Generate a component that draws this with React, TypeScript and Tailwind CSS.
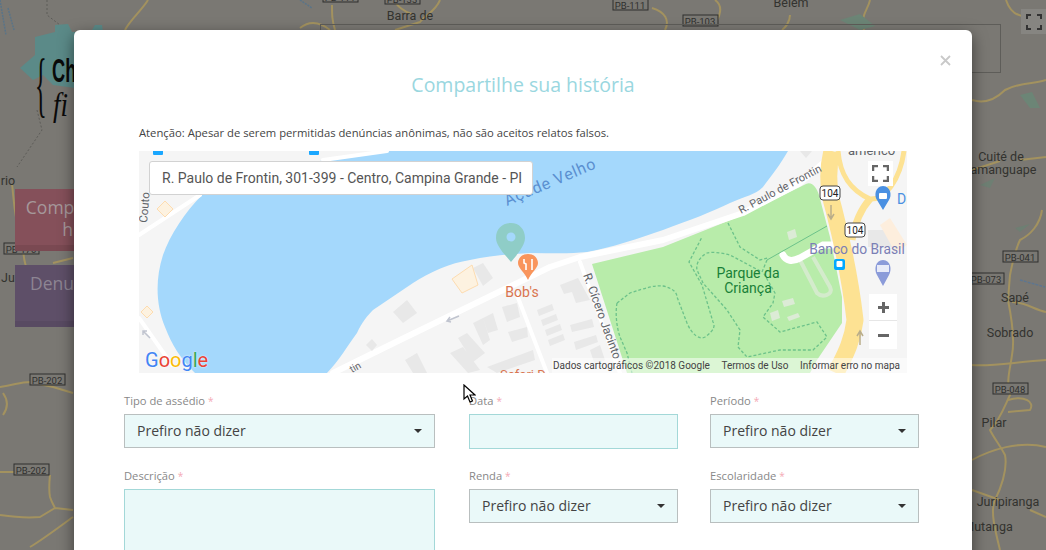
const shields = [
  { label: "PB-111", x: 630, y: 5 },
  { label: "PB-103", x: 700, y: 21 },
  { label: "PB-133", x: 402, y: -1 },
  { label: "PB-111", x: 340, y: -3 },
  { label: "PB-170", x: 21, y: 249 },
  { label: "PB-202", x: 47, y: 380 },
  { label: "PB-202", x: 31, y: 470 },
  { label: "PB-041", x: 1020, y: 257 },
  { label: "PB-073", x: 986, y: 279 },
  { label: "PB-048", x: 1010, y: 389 },
];

const towns = [
  { label: "Barra de", x: 410, y: 20 },
  { label: "Belém", x: 791, y: 7 },
  { label: "Cuité de", x: 1001, y: 161 },
  { label: "Mamanguape", x: 998, y: 174 },
  { label: "Sapé", x: 1015, y: 302 },
  { label: "Sobrado", x: 1010, y: 337 },
  { label: "Pilar", x: 994, y: 427 },
  { label: "Juripiranga", x: 1008, y: 506 },
  { label: "Mutanga", x: 988, y: 531 },
  { label: "rio", x: 8, y: 185 },
  { label: "Ju", x: 8, y: 282 },
];

function BackgroundMap() {
  return (
    <svg className="absolute inset-0 h-[550px] w-[1046px]" viewBox="0 0 1046 550" fontFamily="Roboto, sans-serif">
      <g fill="none" stroke="#a3925f" strokeWidth="2" strokeLinejoin="round">
        <path d="M148 0 C142 10 130 20 125 30" />
        <path d="M12 184 C14 200 14 215 20 235 C25 250 22 262 28 270 M53 263 L73 258" />
        <path d="M0 387 C15 385 20 382 30 382 L53 387 L73 393 M3 393 C8 400 8 408 3 415" />
        <path d="M0 472 L45 472 M50 475 C49 485 49 492 50 497 C52 503 54 506 55 508 L73 510 M0 515 C20 518 30 518 40 517 L55 508" />
        <path d="M30 547 C42 540 55 530 73 517" />
        <path d="M972 100 C985 104 995 100 1005 90 C1020 82 1035 84 1046 80" />
        <path d="M1006 0 C1010 12 1018 17 1028 16" />
        <path d="M972 170 L1000 161 M1020 160 L1046 157" />
        <path d="M1042 210 C1040 225 1030 235 1020 240 C1015 250 1012 265 1010 275 L1008 300 C1012 320 1015 340 1012 355 C1010 370 1006 380 1010 395 C1005 405 1000 420 990 430 C995 440 1000 445 1005 455 C1008 470 1000 490 995 500 C990 510 995 530 1000 550" />
        <path d="M972 365 C990 367 1015 362 1046 360 M972 460 C990 450 1020 440 1046 447 M972 490 L1000 500 M1008 400 C1025 395 1035 402 1030 410 L1008 412 M1030 510 L1046 517 M1012 302 C1025 302 1035 310 1046 312" />
        <path d="M440 0 C435 12 425 15 420 22 L395 30 M300 28 C310 20 320 22 330 30 M332 5 C332 15 332 20 335 30" />
        <path d="M395 0 C396 6 405 12 412 14 M652 8 C665 12 670 20 665 30 M715 0 C722 5 722 12 716 22 M790 15 C790 22 785 28 782 30 M870 0 C868 10 860 15 864 30" />
      </g>
      <path d="M0 0 L6 35 M8 8 L14 30 M300 0 L312 8" stroke="#5a7488" strokeWidth="1.5" strokeDasharray="2 1" fill="none" />
      <path d="M47 0 L47 15 L60 25 M37 110 L42 130 L17 167" fill="none" stroke="#5d5c58" strokeWidth="1" strokeDasharray="2 2" />
      <path d="M1020 95 L1032 92 L1040 108 L1030 108 Z" fill="#6c8576" />
      <path d="M980 185 L995 178 L990 188 Z M1015 228 L1030 224 L1020 232 Z" fill="#6e7f73" />
      <path d="M840 20 L860 14 L875 26 L860 30 Z" fill="#6c8576" />
      <path d="M1020 280 L1045 287" stroke="#5e7690" strokeWidth="1.5" strokeDasharray="3 1" />
      {shields.map((s) => (
        <g key={`${s.label}-${s.x}`}>
          <rect x={s.x - 17} y={s.y - 6} width="35" height="11" fill="#7a7873" stroke="#2f2f2e" />
          <text x={s.x} y={s.y + 3.5} fontSize="9.5" fill="#2f2f2e" textAnchor="middle">
            {s.label}
          </text>
        </g>
      ))}
      {towns.map((t) => (
        <text key={t.label} x={t.x} y={t.y} fontSize="12.5" fill="#33332f" textAnchor="middle">
          {t.label}
        </text>
      ))}
    </svg>
  );
}

function Logo() {
  return (
    <svg className="absolute left-0 top-0 h-[130px] w-[110px]" viewBox="0 0 110 130">
      <path d="M20 68 L35 55 L35 37 L55 32 L55 25 L68 24 L72 32 L90 32 L90 90 L53 85 L43 75 L33 80 Z" fill="#5b8a88" />
      <path d="M92 30 L95 25 L102 25 L103 32 Z" fill="#5b8a88" />
      <text transform="translate(35 108) scale(.42 1.25)" fontFamily="Liberation Serif, serif" fontSize="58" fill="#0a0a0a">
        {"{"}
      </text>
      <text transform="translate(52 82) scale(.7 1.25)" fontFamily="Liberation Sans, sans-serif" fontWeight="700" fontSize="26" fill="#0a0a0a">
        Ch
      </text>
      <text transform="translate(53 116) scale(.9 1.1)" fontFamily="Liberation Serif, serif" fontStyle="italic" fontSize="30" fill="#0a0a0a">
        fi
      </text>
    </svg>
  );
}

function SideButtons() {
  return (
    <div className="relative flex w-[156px] flex-col gap-[14px] text-center text-[17.5px] leading-[22px] text-[#a5989a]">
      <div className="h-[62px] border-b-[6px] border-[#7a4952] bg-[#85505a] px-2 pt-[7px]">Compartilhe sua história</div>
      <div className="h-[62px] border-b-[6px] border-[#584a62] bg-[#5e4f68] px-2 pt-[7px] text-[#8d8593]">
        Denuncie o seu caso
      </div>
    </div>
  );
}

function StreetMap() {
  return (
    <svg className="block h-[222px] w-[768px]" viewBox="139 151 768 222" fontFamily="Roboto, sans-serif">
      <rect x="139" y="151" width="768" height="222" fill="#f5f5f5" />
      <path
        d="M387 151 L323 160 L250 185 L202 195 C185 212 170 235 163 255 C155 280 156 305 165 327 C172 345 180 358 195 373 L327 373 C338 362 348 345 357 333 C362 322 368 315 373 310 L413 283 C430 272 450 263 470 260 C490 256 510 254 530 253 C550 253 570 254 587 252 C610 248 640 238 663 230 C690 220 712 212 730 203 C745 196 755 195 763 187 C772 175 780 165 788 151 Z"
        fill="#a4d8fc"
      />
      <path d="M592 264 L663 247 L743 215 L806 184 C812 181 817 188 819 195 L830 237 L842 297 L842 323 L817 360 L810 373 L627 373 Z" fill="#b8ecaa" />
      <g fill="none" stroke="#ffffff" strokeWidth="6" strokeLinecap="round" strokeLinejoin="round">
        <path d="M333 373 L400 340 L507 288 L550 267 L580 257 L663 240 L743 213 L800 183 L823 163" />
        <path d="M323 160 L387 151 M139 235 L200 195 M139 318 L172 365 M517 295 L547 373 M580 262 L620 373" strokeWidth="4" />
      </g>
      <g fill="#e8e8e8">
        <path d="M393 312 L407 300 L417 313 L403 323 Z" />
        <path d="M366 345 L372 339 L377 345 L372 351 Z" />
        <path d="M473 268 L483 263 L493 278 L483 286 Z" />
        <path d="M473 323 L483 318 L490 340 L483 345 Z M483 318 L493 313 L498 330 L488 333 Z M502 307 L517 303 L520 317 L507 322 Z M508 332 L527 327 L528 337 L512 342 Z" />
        <path d="M458 338 L467 333 L485 353 L473 362 Z M450 353 L463 347 L480 370 L468 373 Z M405 360 L417 353 L427 373 L413 373 Z M487 367 L533 350 L535 360 L497 373 Z" />
        <path d="M537 310 L552 304 L554 310 L539 316 Z M541 320 L556 314 L558 320 L543 326 Z M545 330 L560 324 L562 330 L547 336 Z M548 340 L563 334 L565 340 L550 346 Z" />
        <path d="M560 285 L578 278 L590 300 L576 303 L572 292 L564 294 Z M570 325 L592 319 L594 327 L572 332 Z M574 342 L596 335 L598 342 L576 350 Z M590 350 L600 345 L605 360 L595 365 Z" />
        <path d="M868 230 L893 230 L893 247 L868 247 Z M800 151 L812 151 L806 158 Z" />
      </g>
      <path d="M787 232 L795 229 L797 237 L789 240 Z M782 301 L793 298 L795 304 L784 307 Z M770 313 L778 310 L780 318 L772 321 Z M787 317 L798 313 L800 317 L789 321 Z" fill="#dcebd6" />
      <path d="M157 209 L165 201 L173 209 L165 217 Z M141 312 L147 306 L153 312 L147 318 Z M452 279 L472 265 L478 285 L462 293 Z" fill="#fdf2e0" stroke="#fddcb0" />
      <path d="M880 225 L890 218 L907 245 L895 252 Z" fill="#fdeedd" />
      <path d="M800 260 L817 293 C822 298 834 295 830 287 L813 257" fill="none" stroke="#d4ebcc" strokeWidth="4" />
      <path d="M783 255 C786 261 792 262 800 258 L823 245 L835 245" fill="none" stroke="#fff" strokeWidth="7" strokeLinecap="round" />
      <g fill="none" stroke="#fde293" strokeLinejoin="round">
        <path d="M832 151 C827 170 828 190 834 210 C843 245 851 285 855 320 C852 345 842 360 836 373" strokeWidth="17" />
        <path d="M838 151 C840 175 850 190 870 199 C885 200 900 180 904 151" strokeWidth="5" />
        <path d="M870 199 C860 210 855 222 852 240" strokeWidth="7" />
      </g>
      <g fill="none" stroke="#6cc28a" strokeWidth="1.3" strokeDasharray="3 2">
        <path d="M617 303 L630 293 C645 288 655 285 663 286 C672 288 677 292 677 297 L687 323 C692 335 700 340 705 337 C715 330 715 325 713 322 L702 285 L689 262 L702 237" />
        <path d="M728 223 L740 247 L760 260 L768 258" />
        <path d="M767 260 L762 272 L730 255 C720 252 710 252 707 253 C698 258 696 265 697 270 L703 283 L727 310 L740 330 L738 347 L747 357 L780 350 L813 350 L827 337 L817 322 L780 332 L763 317 L773 303 L775 293 L763 272" />
        <path d="M617 303 C615 315 617 328 620 337 L627 353 L632 373" />
      </g>
      <path d="M767 260 L827 226" stroke="#6cc28a" strokeWidth="1" />
      <text transform="translate(507 206) rotate(-23)" fontSize="16" fill="#5a8fd0" letterSpacing=".8">
        Açude Velho
      </text>
      <text transform="translate(741 214) rotate(-28)" fontSize="11" fill="#5f6368">
        R. Paulo de Frontin
      </text>
      <text transform="translate(583 275) rotate(70)" fontSize="12" fill="#5f6368">
        R. Cícero Jacinto
      </text>
      <text transform="translate(147 223) rotate(-85)" fontSize="11.5" fill="#5f6368">
        Couto
      </text>
      <text transform="translate(352 373) rotate(-30)" fontSize="10" fill="#5f6368">
        tin
      </text>
      <text x="748" y="278" fontSize="14" fill="#188038" textAnchor="middle">
        Parque da
      </text>
      <text x="748" y="293" fontSize="14" fill="#188038" textAnchor="middle">
        Criança
      </text>
      <text x="857" y="254" fontSize="13.8" fill="#7b7fb5" textAnchor="middle">
        Banco do Brasil
      </text>
      <text x="522" y="297" fontSize="14" fill="#d9744f" textAnchor="middle">
        Bob's
      </text>
      <text x="500" y="379" fontSize="13" fill="#d9744f">
        Safari D
      </text>
      <text x="848" y="155" fontSize="13" fill="#5f6368">
        americo
      </text>
      <text x="897" y="204" fontSize="14" fill="#4a90e2">
        Dr
      </text>
      <rect x="820" y="186" width="20" height="14" rx="3" fill="#fff" stroke="#444" />
      <text x="830" y="197" fontSize="10" fill="#222" textAnchor="middle">
        104
      </text>
      <rect x="845" y="223" width="20" height="14" rx="3" fill="#fff" stroke="#444" />
      <text x="855" y="234" fontSize="10" fill="#222" textAnchor="middle">
        104
      </text>
      <path d="M883 186 C875 186 874 196 877 200 L883 210 L889 200 C892 196 891 186 883 186 Z" fill="#4a90e2" />
      <rect x="879" y="193" width="8" height="6" rx="1" fill="#fff" />
      <path d="M883 260 C875 260 874 270 877 275 L883 286 L889 275 C892 270 891 260 883 260 Z" fill="#8b9bd9" />
      <rect x="877" y="265" width="12" height="7" fill="#fff" opacity=".8" />
      <rect x="834" y="259" width="11" height="11" rx="2" fill="#00a8ff" />
      <rect x="836.5" y="261" width="6" height="6" rx="1" fill="#fff" />
      <rect x="153" y="148" width="10" height="7" rx="1" fill="#1aa7ff" />
      <rect x="309" y="148" width="10" height="7" rx="1" fill="#1aa7ff" />
      <path d="M511 223 C502 223 496 229 496 238 C496 246 506 256 511 262 C516 256 525 246 525 238 C525 229 519 223 511 223 Z" fill="#8fcdc7" />
      <circle cx="511" cy="237" r="4.5" fill="#a4d8fc" />
      <path d="M528 254 C521 254 518 259 518 263 C518 268 525 273 528 280 C531 273 538 268 538 263 C538 259 535 254 528 254 Z" fill="#f9955c" />
      <path d="M524 259 L524 263 L526 264 L526 270 M532 259 L532 270" stroke="#fff" strokeWidth="1.6" fill="none" />
      <path d="M831 205 L831 218 M828 214 L831 219 L834 214 M860 345 L860 332 M857 336 L860 331 L863 336" stroke="#b9ad8a" strokeWidth="1.5" fill="none" />
      <path d="M459 316 L447 321 M450 317 L447 321 L451 322 M150 338 L143 331 M143 335 L143 331 L147 331" stroke="#c0c4cf" strokeWidth="1.5" fill="none" />
    </svg>
  );
}

function MapPanel() {
  return (
    <div className="relative h-[222px] w-[768px] overflow-hidden">
      <StreetMap />
      <div className="absolute left-[10px] top-[10px] flex h-[34px] w-[384px] items-center overflow-hidden whitespace-nowrap rounded-[3px] border border-[#d2d2d2] bg-white pl-[12px] font-['Roboto',sans-serif] text-[14px] text-[#555]">
        R. Paulo de Frontin, 301-399 - Centro, Campina Grande - PI
      </div>
      <div className="absolute left-[729px] top-[10px] flex h-[25px] w-[25px] items-center justify-center bg-white">
        <svg width="17" height="17" viewBox="0 0 17 17" fill="none" stroke="#666" strokeWidth="2.5">
          <path d="M1 6V1h5M11 1h5v5M16 11v5h-5M6 16H1v-5" />
        </svg>
      </div>
      <div className="absolute left-[730px] top-[143px] flex h-[55px] w-[28px] flex-col items-center bg-white text-[#666]">
        <div className="flex h-[27px] w-full items-center justify-center border-b border-[#e6e6e6]">
          <svg width="11" height="11" viewBox="0 0 11 11" fill="#666">
            <path d="M4 0h3v4h4v3H7v4H4V7H0V4h4z" />
          </svg>
        </div>
        <div className="flex h-[28px] w-full items-center justify-center">
          <div className="h-[3px] w-[11px] bg-[#666]" />
        </div>
      </div>
      <div className="absolute bottom-0 right-0 flex h-[15px] w-[355px] items-center justify-between whitespace-nowrap bg-white/50 pl-[1px] pr-[7px] font-['Roboto',sans-serif] text-[10px] text-[#444]">
        <span>Dados cartográficos ©2018 Google</span>
        <span>Termos de Uso</span>
        <span>Informar erro no mapa</span>
      </div>
      <div className="absolute bottom-[1px] left-[6px] font-['Roboto',sans-serif] text-[20px] leading-[24px] [text-shadow:0_0_2px_#fff]">
        <span className="text-[#4285f4]">G</span>
        <span className="text-[#ea4335]">o</span>
        <span className="text-[#fbbc05]">o</span>
        <span className="text-[#4285f4]">g</span>
        <span className="text-[#34a853]">l</span>
        <span className="text-[#ea4335]">e</span>
      </div>
    </div>
  );
}

function FieldLabel({ children }: { children: string }) {
  return (
    <label className="mb-[5px] block h-[15px] text-[11.2px] leading-[13px] text-[#888]">
      {children}
      <span className="ml-[3px] text-[10px] text-[#f4a9b5]">*</span>
    </label>
  );
}

function SelectBox() {
  return (
    <div className="flex h-[34px] items-center justify-between border border-[#b9bfbf] bg-[#eaf9f9] px-[12px] pb-[1px] text-[14px] text-[#444]">
      <span>Prefiro não dizer</span>
      <span className="h-0 w-0 border-x-[4px] border-t-[4px] border-x-transparent border-t-[#333]" />
    </div>
  );
}

function Field({ label, children }: { label: string; children: React.ReactNode }) {
  return (
    <div>
      <FieldLabel>{label}</FieldLabel>
      {children}
    </div>
  );
}

function Form() {
  return (
    <form className="ml-[50px] mt-[21px] flex">
      <div className="flex w-[311px] flex-col gap-[21px]">
        <Field label="Tipo de assédio">
          <SelectBox />
        </Field>
        <Field label="Descrição">
          <textarea className="block h-[120px] w-full resize-none border border-[#a3d8d8] bg-[#eaf9f9]" />
        </Field>
      </div>
      <div className="ml-[34px] flex w-[209px] flex-col gap-[20px]">
        <Field label="Data">
          <input className="block h-[35px] w-full border border-[#a3d8d8] bg-[#eaf9f9]" />
        </Field>
        <Field label="Renda">
          <SelectBox />
        </Field>
      </div>
      <div className="ml-[32px] flex w-[209px] flex-col gap-[21px]">
        <Field label="Período">
          <SelectBox />
        </Field>
        <Field label="Escolaridade">
          <SelectBox />
        </Field>
      </div>
    </form>
  );
}

export default function App() {
  return (
    <div className="relative h-[550px] w-[1046px] overflow-hidden bg-[#7a7873] font-['Open_Sans',sans-serif]">
      <BackgroundMap />
      <Logo />
      <div className="absolute left-[320px] top-[24px] h-[49px] w-[681px] border border-[#5e5d59]" />
      <div className="absolute left-[1021px] top-[9px] flex h-[25px] w-[25px] items-center justify-center bg-[#868581]">
        <svg width="16" height="16" viewBox="0 0 16 16" fill="none" stroke="#333" strokeWidth="2">
          <path d="M1 5V1h4M11 1h4v4M15 11v4h-4M5 15H1v-4" />
        </svg>
      </div>
      <div className="pl-[15px] pt-[189px]">
        <SideButtons />
      </div>

      {/* modal */}
      <div className="absolute left-[74px] top-[30px] h-[640px] w-[898px] rounded-[6px] bg-white shadow-[0_5px_15px_rgba(0,0,0,0.5)]">
        <div className="absolute right-[21px] top-[25px] text-[#c9c9c9]">
          <svg width="11" height="11" viewBox="0 0 11 11" stroke="currentColor" strokeWidth="1.8">
            <path d="M1 1l9 9M10 1l-9 9" />
          </svg>
        </div>
        <h2 className="pt-[41px] text-center text-[19.5px] leading-[28px] text-[#9ad7df]">Compartilhe sua história</h2>
        <p className="ml-[65px] mt-[26px] whitespace-nowrap text-[11.25px] leading-[16px] text-[#444]">
          Atenção: Apesar de serem permitidas denúncias anônimas, não são aceitos relatos falsos.
        </p>
        <div className="ml-[65px] mt-[10px]">
          <MapPanel />
        </div>
        <Form />
      </div>

      {/* cursor */}
      <svg className="absolute left-[463px] top-[384px]" width="13" height="20" viewBox="0 0 13 20">
        <path d="M1 1 L1 15 L4.5 12 L7 18 L9.5 17 L7 11 L12 11 Z" fill="#fff" stroke="#000" strokeWidth="1.2" />
      </svg>
    </div>
  );
}
